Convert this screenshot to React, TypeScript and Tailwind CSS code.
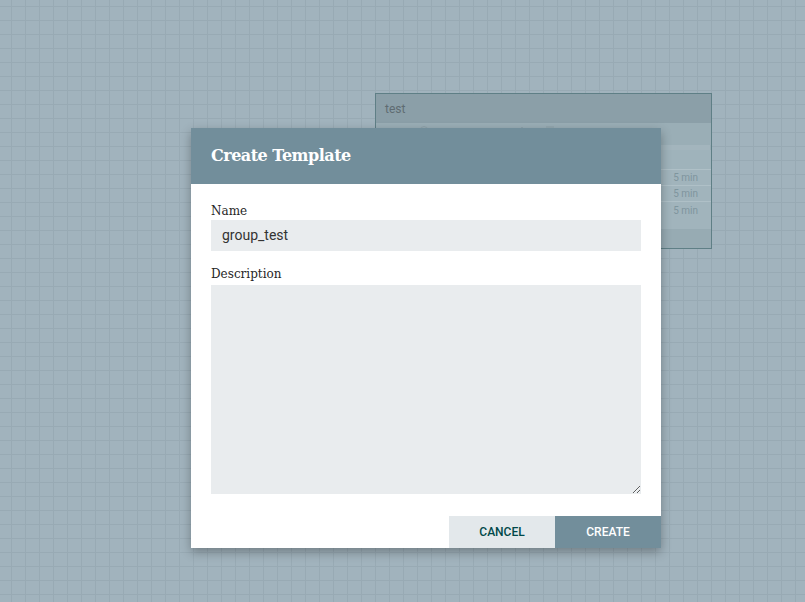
import React from "react";

const StatRow = ({ last = false }: { last?: boolean }) => (
  <div
    className={`flex h-[16px] items-center justify-end bg-[#a1b4bc] pr-[13px] text-[10px] text-[#7f959e] ${
      last ? "" : "border-b border-[#afc0c7]"
    }`}
    style={{ fontFamily: "Roboto, sans-serif" }}
  >
    5 min
  </div>
);

const ProcessGroup = () => (
  <div className="absolute left-[375px] top-[93px] flex h-[156px] w-[337px] flex-col border border-[#5f7f86] bg-[#97abb3]">
    <div
      className="flex h-[29px] items-center bg-[#8b9fa8] px-[9px] text-[12px] text-[#5f6c72]"
      style={{ fontFamily: "Roboto, sans-serif" }}
    >
      test
    </div>
    <div className="relative h-[22px] bg-[#9aaeb6]">
      <span className="absolute left-[14px] top-[6px] h-[2px] w-[8px] bg-[#8ea2aa]" />
      <span className="absolute left-[44px] top-[3px] h-[5px] w-[8px] rounded-t-full border border-[#8ea2aa]" />
      <span className="absolute left-[107px] top-[5px] h-[3px] w-[10px] bg-[#b07d7e]" />
      <span className="absolute left-[145px] top-[4px] h-[4px] w-[2px] bg-[#8ea2aa]" />
      <span className="absolute left-[170px] top-[3px] h-[5px] w-[8px] bg-[#93a7af]" />
    </div>
    <div className="mx-[1px] h-[5px] bg-[#a3b5bd]" />
    <div className="h-[20px] border-b border-[#afc0c7] bg-[#9fb3bb]" />
    <StatRow />
    <StatRow />
    <StatRow last />
    <div className="h-[11px] bg-[#a1b4bc]" />
    <div className="flex-1 bg-[#97abb3]" />
  </div>
);

const CreateTemplateDialog = () => (
  <div className="absolute left-[191px] top-[128px] flex h-[420px] w-[470px] flex-col bg-white shadow-[0_4px_10px_rgba(0,0,0,0.3)]">
    <div className="flex h-[56px] items-center bg-[#728e9b] px-5">
      <h2
        className="text-[16px] font-bold tracking-[-0.5px] text-white"
        style={{ fontFamily: '"DejaVu Serif", serif' }}
      >
        Create Template
      </h2>
    </div>

    <div className="flex flex-1 flex-col px-5 pt-[19px]">
      <label
        className="mb-[1px] text-[12px] leading-[16px] text-[#262626]"
        style={{ fontFamily: '"DejaVu Serif", serif' }}
      >
        Name
      </label>
      <div
        className="flex h-[31px] items-center bg-[#e9ecee] px-[11px] text-[14px] text-[#333]"
        style={{ fontFamily: "Roboto, sans-serif" }}
      >
        group_test
      </div>

      <label
        className="mb-[3px] mt-[15px] text-[12px] leading-[16px] text-[#262626]"
        style={{ fontFamily: '"DejaVu Serif", serif' }}
      >
        Description
      </label>
      <textarea className="h-[209px] w-full resize-y bg-[#e9ecee] px-[11px] py-2 text-[14px] outline-none" />
    </div>

    <div
      className="flex justify-end text-[12px] font-medium"
      style={{ fontFamily: "Roboto, sans-serif" }}
    >
      <button className="h-[32px] w-[106px] bg-[#e3e8eb] uppercase text-[#004849]">
        Cancel
      </button>
      <button className="h-[32px] w-[106px] bg-[#728e9b] uppercase text-white">
        Create
      </button>
    </div>
  </div>
);

export default function App() {
  return (
    <div className="relative h-[602px] w-full overflow-hidden bg-[#a1b3bd] bg-[image:linear-gradient(to_right,#98aab4_1px,transparent_1px),linear-gradient(to_bottom,#98aab4_1px,transparent_1px)] bg-[size:14px_14px] bg-[position:11px_6px]">
      <ProcessGroup />
      <CreateTemplateDialog />
    </div>
  );
}
